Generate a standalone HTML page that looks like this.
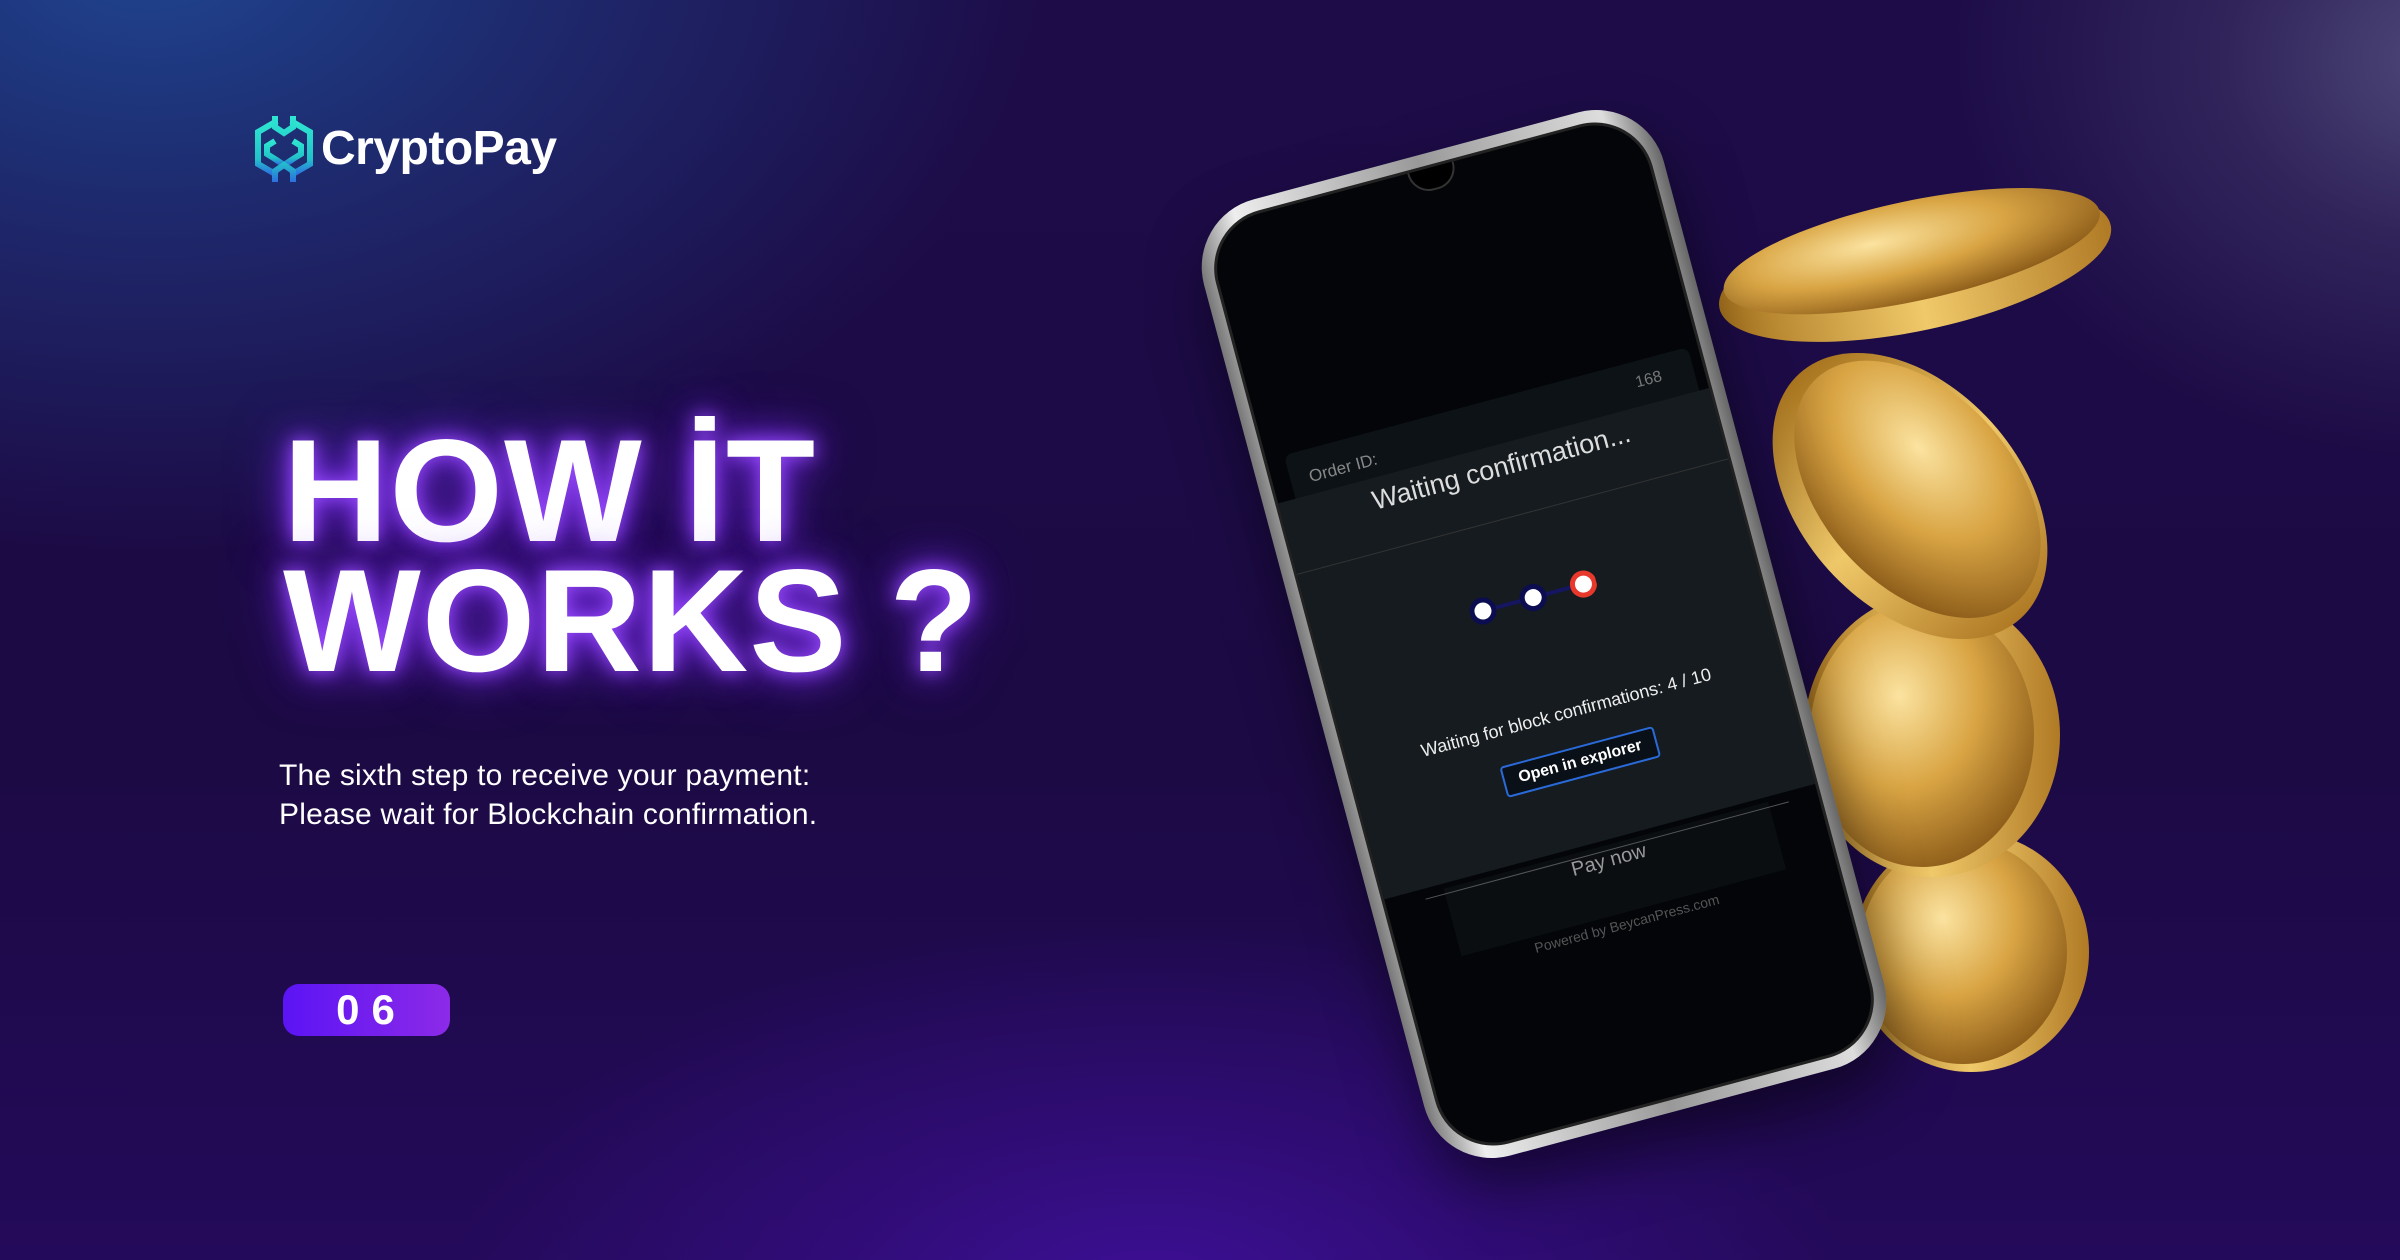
<!DOCTYPE html>
<html><head><meta charset="utf-8"><style>
html,body{margin:0;padding:0}
body{width:2400px;height:1260px;overflow:hidden;position:relative;font-family:"Liberation Sans",sans-serif;
background:
radial-gradient(ellipse 700px 380px at 1150px 1300px,#3d0f96 0%,rgba(61,15,150,.5) 45%,rgba(40,10,100,0) 100%),
radial-gradient(ellipse 900px 600px at 150px -50px,#1f4590 0%,rgba(31,69,144,.55) 40%,rgba(30,12,70,0) 100%),
radial-gradient(ellipse 500px 400px at 2450px 60px,#4e4878 0%,rgba(78,72,120,.4) 45%,rgba(30,12,70,0) 100%),
linear-gradient(180deg,#1d0c48 0%,#1c0a44 60%,#240a5a 100%);}
.logo{position:absolute;left:253px;top:113px}
.brand{position:absolute;left:321px;top:121px;font-size:48px;font-weight:bold;color:#fff;letter-spacing:-0.5px}
.h{position:absolute;left:283px;font-size:146px;font-weight:bold;color:#fff;line-height:1;letter-spacing:1px;
text-shadow:0 0 18px #9a4cff,0 0 36px #7a2cf0,0 0 60px rgba(120,40,240,.6)}
.p{position:absolute;left:279px;top:756px;font-size:30px;color:#fff;line-height:39px;letter-spacing:0.2px}
.badge{position:absolute;left:283px;top:984px;width:167px;height:52px;border-radius:16px;
background:linear-gradient(90deg,#5b14f5,#8c2ae8);color:#fff;font-weight:bold;font-size:42px;text-align:center;line-height:52px;letter-spacing:12px;text-indent:10px}
.phone{position:absolute;left:1306px;top:139px;width:476px;height:990px;transform:rotate(-15deg);
border-radius:70px;background:linear-gradient(90deg,#777 0%,#eee 10%,#999 50%,#ddd 90%,#666 100%);box-shadow:0 30px 60px rgba(0,0,0,.5)}
.scr{position:absolute;left:12px;top:12px;right:12px;bottom:12px;border-radius:60px;background:#030508;overflow:hidden;border:3px solid #222}
.notch{position:absolute;left:210px;top:-3px;width:44px;height:24px;border-radius:0 0 22px 22px;background:#000;border:2px solid #333;border-top:none}
.s{position:absolute;color:#ccc;white-space:nowrap;transform:translate(-50%,-50%)}
</style></head><body>
<svg class="logo" width="62" height="72" viewBox="0 0 62 72">
<defs><linearGradient id="lg" x1="0" y1="0" x2="0" y2="1"><stop offset="0" stop-color="#2ee6d0"/><stop offset=".7" stop-color="#22c3c9"/><stop offset="1" stop-color="#2d6ee0"/></linearGradient></defs>
<g fill="none" stroke="url(#lg)" stroke-width="6">
<path d="M24 8 L5 19 V51 L24 62 M38 8 L57 19 V51 L38 62"/>
<path d="M22 28 L14 33 V41 L22 46 M40 28 L48 33 V41 L40 46 L31 52 L22 46"/>
<path d="M22 3 V14 L31 20 L40 14 V3 M22 69 V58 L31 52 L40 58 V69"/>
</g></svg>
<div class="brand">CryptoPay</div>
<div class="h" style="top:418px">HOW İT</div>
<div class="h" style="top:548px">WORKS ?</div>
<div class="p">The sixth step to receive your payment:<br>Please wait for Blockchain confirmation.</div>
<div class="badge">06</div>

<svg style="position:absolute;left:0;top:0" width="2400" height="1260">
<defs>
<radialGradient id="g1" cx=".4" cy=".35" r=".7"><stop offset="0" stop-color="#fbe3a0"/><stop offset=".5" stop-color="#d9a544"/><stop offset="1" stop-color="#8a5a18"/></radialGradient>
<linearGradient id="ge" x1="0" y1="0" x2="1" y2="0"><stop offset="0" stop-color="#a8741f"/><stop offset=".5" stop-color="#f0c96a"/><stop offset="1" stop-color="#b07a25"/></linearGradient>
</defs>
<g transform="translate(1971,952)"><ellipse rx="118" ry="120" fill="url(#ge)"/><ellipse cx="-8" rx="104" ry="112" fill="url(#g1)"/></g>
<g transform="translate(1932,735)"><ellipse rx="128" ry="142" fill="url(#ge)"/><ellipse cx="-10" rx="112" ry="132" fill="url(#g1)"/></g>
<g transform="translate(1910,496) rotate(48)"><ellipse rx="165" ry="110" fill="url(#ge)"/><ellipse cy="-10" rx="150" ry="96" fill="url(#g1)"/></g>
<g transform="translate(1913,257) rotate(-12)"><ellipse cy="10" rx="200" ry="64" fill="url(#ge)"/><ellipse cy="-6" rx="192" ry="50" fill="url(#g1)"/></g>
</svg>

<div class="phone"><div class="scr">
<div class="notch"></div>
<div style="position:absolute;left:18px;top:240px;width:418px;height:70px;background:#0d1216;border-radius:8px"></div>
<div style="position:absolute;left:0;top:285px;width:454px;height:410px;background:#151b1f"></div>
<div style="position:absolute;left:0;top:358px;width:454px;height:1px;background:#333"></div>
<div style="position:absolute;left:60px;top:700px;width:336px;height:70px;background:#0a0e11"></div>
<div style="position:absolute;left:40px;top:705px;width:376px;height:1px;background:#555"></div>
<div class="s" style="left:72px;top:268px;font-size:17px;color:#888">Order ID:</div>
<div class="s" style="left:390px;top:262px;font-size:16px;color:#777">168</div>
<div class="s" style="left:225px;top:308px;font-size:27px;color:#ddd">Waiting confirmation...</div>
<svg class="s" style="left:222px;top:442px" width="130" height="30" viewBox="0 0 130 30">
<line x1="13" y1="15" x2="117" y2="15" stroke="#151560" stroke-width="4"/>
<circle cx="13" cy="15" r="11" fill="#fff" stroke="#0c0c50" stroke-width="5"/>
<circle cx="65" cy="15" r="11" fill="#fff" stroke="#0c0c50" stroke-width="5"/>
<circle cx="117" cy="15" r="11" fill="#fff" stroke="#e8382c" stroke-width="5"/>
</svg>
<div class="s" style="left:224px;top:562px;font-size:18px;color:#eee">Waiting for block confirmations: 4 / 10</div>
<div class="s" style="left:225px;top:613px;font-size:16px;color:#fff;font-weight:bold;border:2px solid #2a6ad8;border-radius:4px;padding:5px 14px;background:#0a1018">Open in explorer</div>
<div class="s" style="left:227px;top:716px;font-size:20px;color:#999">Pay now</div>
<div class="s" style="left:228px;top:781px;font-size:14px;color:#555">Powered by BeycanPress.com</div>
</div></div>
</body></html>
